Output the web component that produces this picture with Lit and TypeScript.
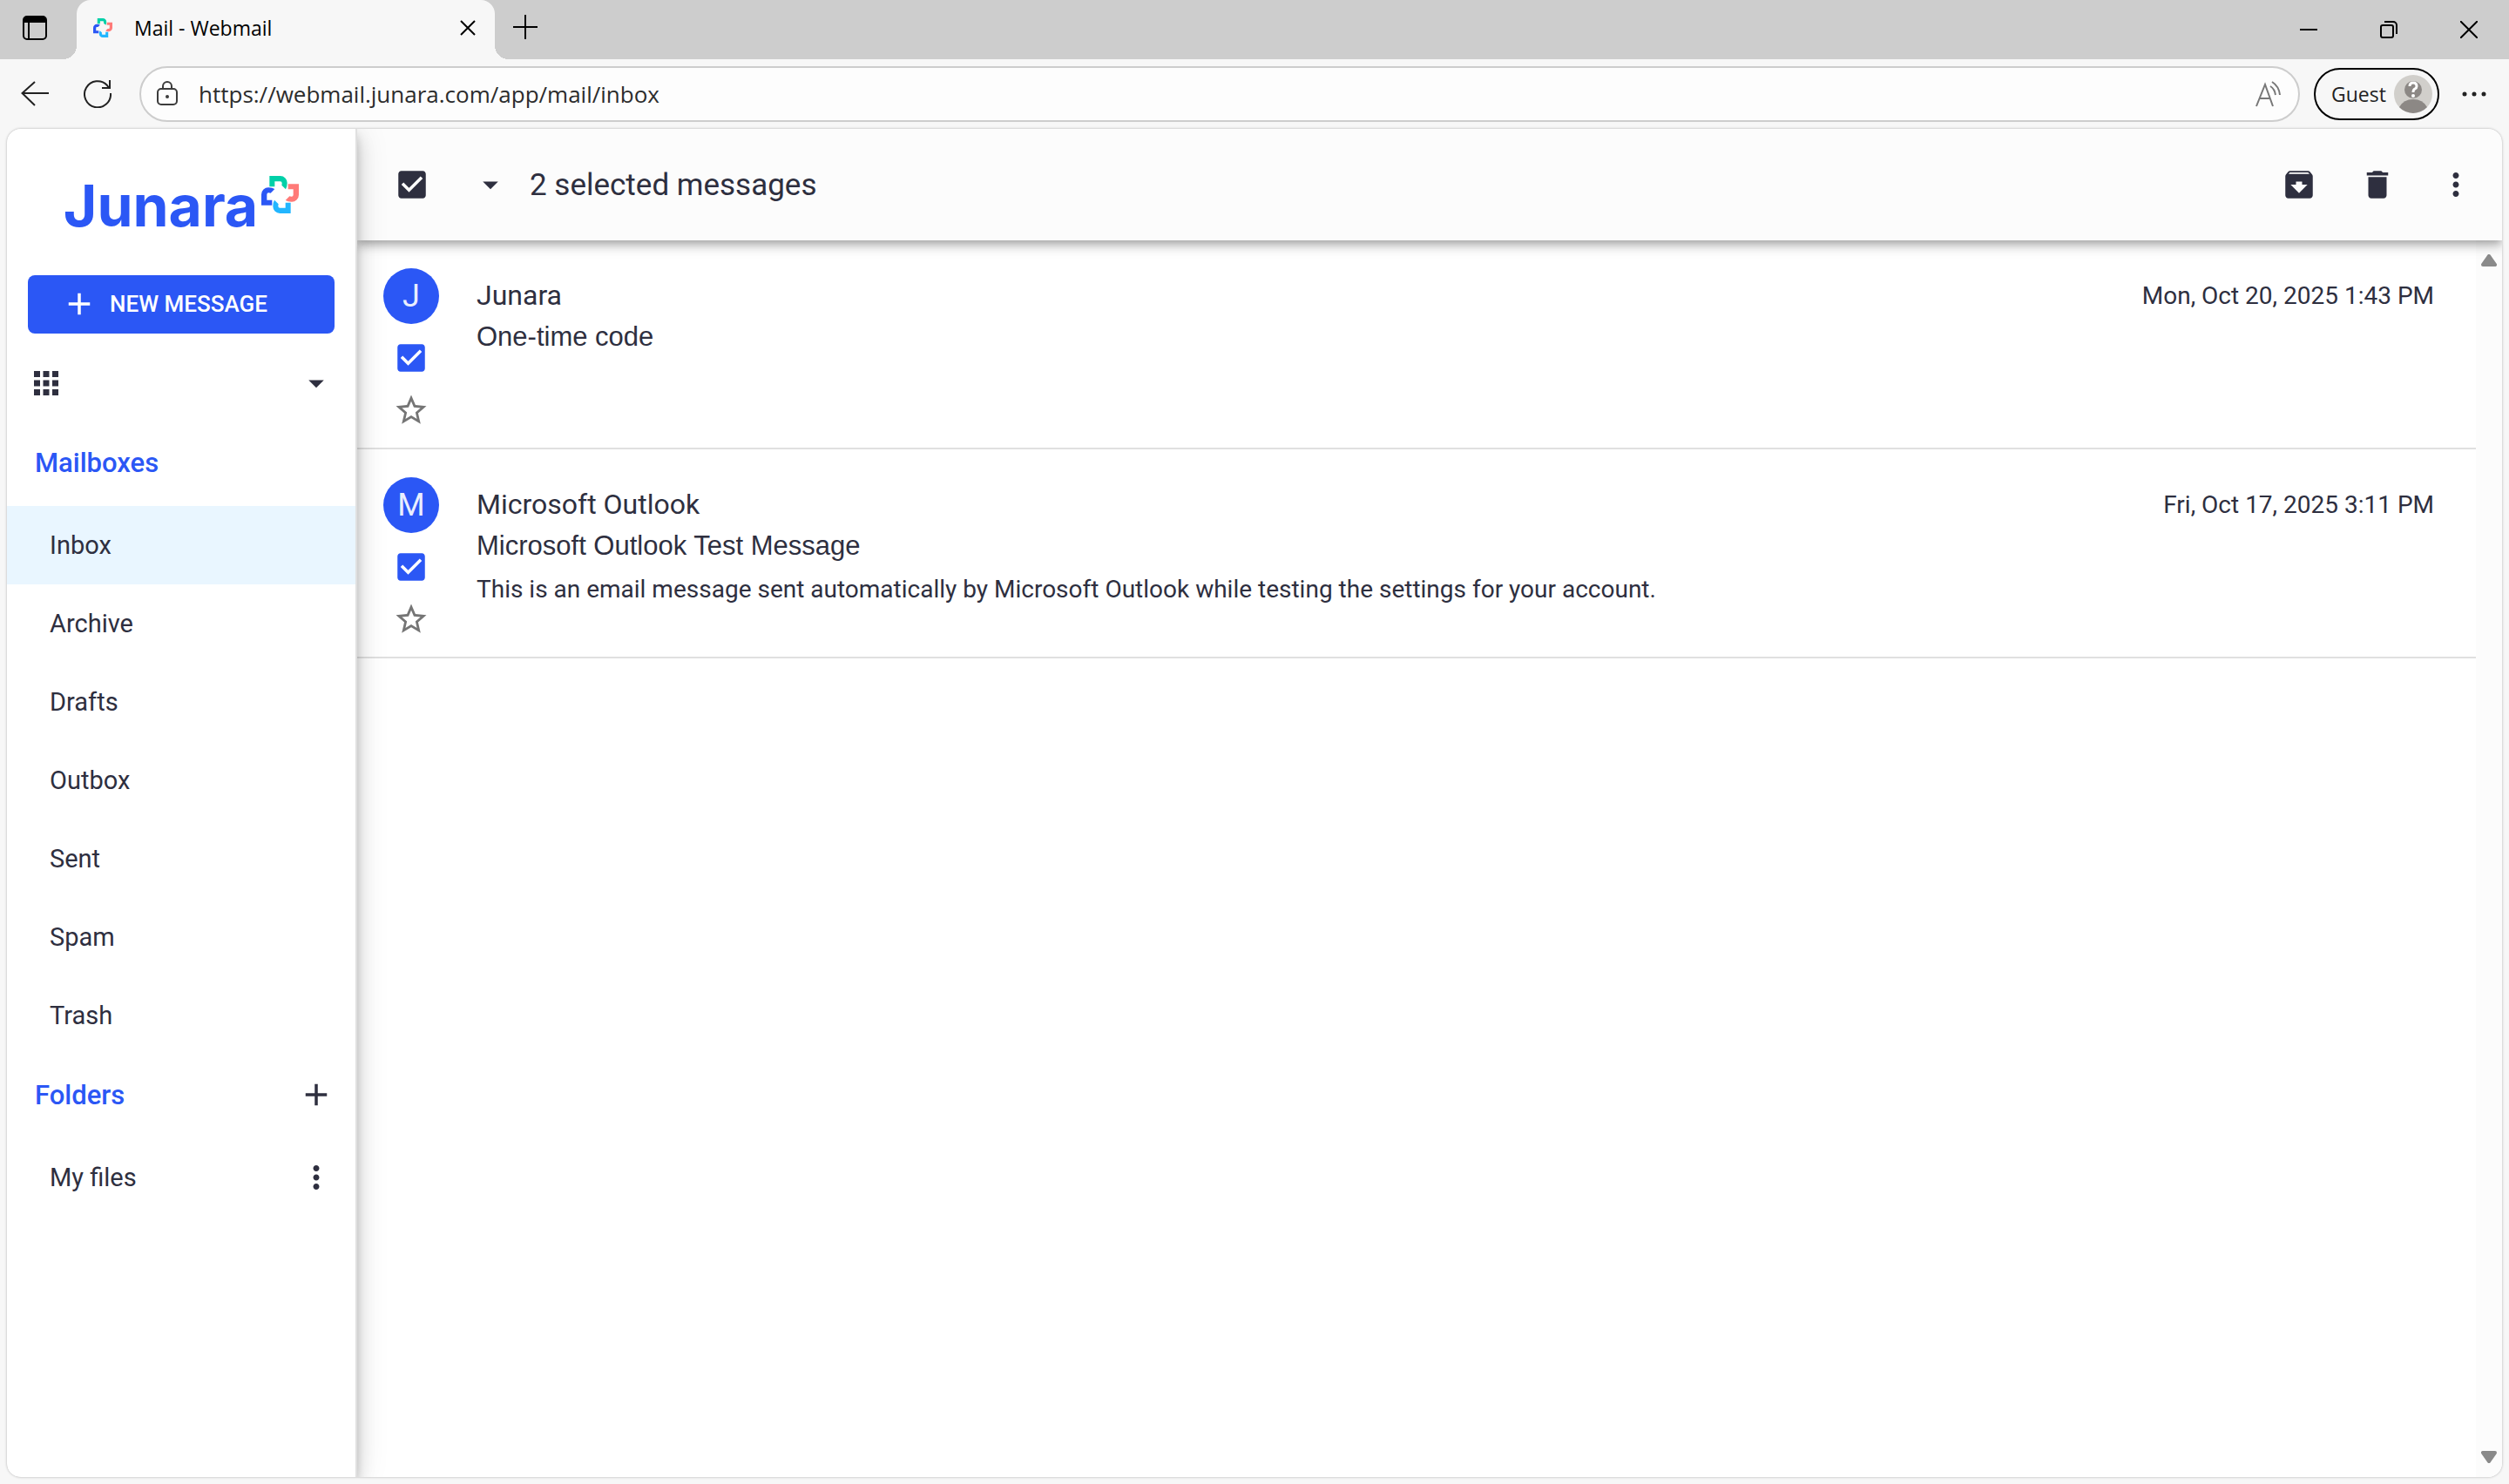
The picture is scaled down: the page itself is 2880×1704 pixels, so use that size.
import { LitElement, html, css, svg, nothing } from "lit";
import { customElement, property, state } from "lit/decorators.js";
import { classMap } from "lit/directives/class-map.js";

interface Message {
  id: number;
  sender: string;
  subject: string;
  preview: string;
  date: string;
  selected: boolean;
}

const ICONS = {
  plus: svg`<path d="M19 13h-6v6h-2v-6H5v-2h6V5h2v6h6v2z"/>`,
  apps: svg`<path d="M4 8h4V4H4v4zm6 12h4v-4h-4v4zm-6 0h4v-4H4v4zm0-6h4v-4H4v4zm6 0h4v-4h-4v4zm6-10v4h4V4h-4zm-6 4h4V4h-4v4zm6 6h4v-4h-4v4zm0 6h4v-4h-4v4z"/>`,
  caret: svg`<path d="M7 10l5 5 5-5z"/>`,
  more: svg`<path d="M12 8c1.1 0 2-.9 2-2s-.9-2-2-2-2 .9-2 2 .9 2 2 2zm0 2c-1.1 0-2 .9-2 2s.9 2 2 2 2-.9 2-2-.9-2-2-2zm0 6c-1.1 0-2 .9-2 2s.9 2 2 2 2-.9 2-2-.9-2-2-2z"/>`,
  checked: svg`<path d="M19 3H5c-1.11 0-2 .9-2 2v14c0 1.1.89 2 2 2h14c1.11 0 2-.9 2-2V5c0-1.1-.89-2-2-2zm-9 14l-5-5 1.41-1.41L10 14.17l7.59-7.59L19 8l-9 9z"/>`,
  unchecked: svg`<path d="M19 5v14H5V5h14m0-2H5c-1.1 0-2 .9-2 2v14c0 1.1.9 2 2 2h14c1.1 0 2-.9 2-2V5c0-1.1-.9-2-2-2z"/>`,
  star: svg`<path d="M22 9.24l-7.19-.62L12 2 9.19 8.63 2 9.24l5.46 4.73L5.82 21 12 17.27 18.18 21l-1.63-7.03L22 9.24zM12 15.4l-3.76 2.27 1-4.28-3.32-2.88 4.38-.38L12 6.1l1.71 4.04 4.38.38-3.32 2.88 1 4.28L12 15.4z"/>`,
  archive: svg`<path d="M20.54 5.23l-1.39-1.68C18.88 3.21 18.47 3 18 3H6c-.47 0-.88.21-1.16.55L3.46 5.23C3.17 5.57 3 6.02 3 6.5V19c0 1.1.9 2 2 2h14c1.1 0 2-.9 2-2V6.5c0-.48-.17-.93-.46-1.27zM12 17.500L6.500 12H10v-2h4v2h3.500L12 17.500zM5.120 5l.810-1h12l.940 1H5.120z"/>`,
  trash: svg`<path d="M6 19c0 1.1.9 2 2 2h8c1.100 0 2-.9 2-2V7H6v12zM19 4h-3.500l-1-1h-5l-1 1H5v2h14V4z"/>`,
};

type IconName = keyof typeof ICONS;

const icon = (name: IconName) =>
  html`<svg class="icon" viewBox="0 0 24 24" aria-hidden="true">${ICONS[name]}</svg>`;

const PETAL = "M28 0H65A24 24 0 0 1 89 25Q89 38 84 46L70 32Q71 30 71 25A6 6 0 0 0 65 19H46V37H28Z";

const brandMark = () => html`
  <svg class="mark" viewBox="0 0 129 129" aria-hidden="true">
    ${["#00d0a8", "#ff7a78", "#22b6ff", "#2b57f5"].map(
      (fill, i) => svg`<path d=${PETAL} fill=${fill} transform="rotate(${i * 90} 64.5 64.5)"/>`
    )}
  </svg>
`;

const sharedStyles = css`
  :host,
  * {
    box-sizing: border-box;
  }
  button {
    display: flex;
    align-items: center;
    justify-content: center;
    padding: 0;
    border: 0;
    background: none;
    color: inherit;
    font: inherit;
    cursor: pointer;
  }
  a {
    color: inherit;
    text-decoration: none;
  }
  svg {
    display: block;
    flex: none;
  }
  .icon {
    width: 42px;
    height: 42px;
    fill: currentColor;
  }
`;

@customElement("browser-chrome")
class BrowserChrome extends LitElement {
  @property() url = "";
  @property() heading = "";

  static styles = [
    sharedStyles,
    css`
      :host {
        display: block;
        font-family: "Open Sans", "Noto Sans", sans-serif;
        color: #000;
      }
      .tabs {
        display: flex;
        height: 68px;
        background: #cdcdcd;
      }
      .workspace {
        width: 88px;
        padding: 0 8px 4px 0;
      }
      .line {
        fill: none;
        stroke: currentColor;
        stroke-width: 2;
      }
      .tab {
        position: relative;
        display: flex;
        align-items: center;
        gap: 25px;
        width: 480px;
        padding: 0 14px 5px 19px;
        border-radius: 16px 16px 0 0;
        background: #f7f7f7;
        font-size: 23px;
      }
      .tab::before,
      .tab::after {
        content: "";
        position: absolute;
        bottom: 0;
        width: 16px;
        height: 16px;
      }
      .tab::before {
        right: 100%;
        background: radial-gradient(circle at 0 0, #cdcdcd 16px, #f7f7f7 16px);
      }
      .tab::after {
        left: 100%;
        background: radial-gradient(circle at 100% 0, #cdcdcd 16px, #f7f7f7 16px);
      }
      .mark {
        width: 22px;
        height: 22px;
      }
      .title {
        flex: 1;
      }
      .close {
        width: 34px;
        height: 34px;
      }
      .new-tab {
        width: 70px;
        padding-bottom: 6px;
      }
      .window {
        display: flex;
        margin-left: auto;
      }
      .window button {
        width: 92px;
      }
      .nav {
        display: flex;
        align-items: center;
        height: 80px;
        padding-left: 4px;
        color: #222;
      }
      .nav-button {
        width: 72px;
        height: 64px;
      }
      .address {
        display: flex;
        flex: 1;
        align-items: center;
        height: 64px;
        margin: 0 16px 0 12px;
        padding: 0 18px;
        border: 2px solid #cdcdcd;
        border-radius: 32px;
        background: #fdfdfd;
      }
      .lock {
        color: #3c3c3c;
      }
      .address input {
        flex: 1;
        min-width: 0;
        margin: 0 24px;
        padding: 0;
        border: 0;
        outline: 0;
        background: none;
        color: #2c2c2c;
        font: inherit;
        font-size: 26px;
      }
      .read {
        color: #777;
      }
      .guest {
        justify-content: space-between;
        width: 144px;
        height: 60px;
        padding: 0 6px 0 18px;
        border: 2px solid #000;
        border-radius: 30px;
        font-size: 23px;
      }
      .menu {
        width: 80px;
        height: 64px;
      }
    `,
  ];

  render() {
    return html`
      <header>
        <div class="tabs">
          <button class="workspace" aria-label="Tab actions">
            <svg width="28" height="28" viewBox="0 0 28 28">
              <rect class="line" x="1" y="1" width="26" height="26" rx="4" />
              <path d="M1 8V5a4 4 0 0 1 4-4h18a4 4 0 0 1 4 4v3z" />
              <path class="line" d="M7 8v19" />
            </svg>
          </button>
          <div class="tab">
            ${brandMark()}
            <span class="title">${this.heading}</span>
            <button class="close" aria-label="Close tab">
              <svg width="18" height="18" viewBox="0 0 18 18"><path class="line" d="M1 1l16 16M17 1L1 17" /></svg>
            </button>
          </div>
          <button class="new-tab" aria-label="New tab">
            <svg width="28" height="28" viewBox="0 0 28 28"><path class="line" d="M14 0v28M0 14h28" /></svg>
          </button>
          <div class="window">
            <button aria-label="Minimize">
              <svg width="20" height="20" viewBox="0 0 20 20"><path class="line" d="M0 10h20" /></svg>
            </button>
            <button aria-label="Restore">
              <svg width="20" height="20" viewBox="0 0 20 20">
                <rect class="line" x="1" y="5" width="14" height="14" rx="2" />
                <path class="line" d="M5 1h10a4 4 0 0 1 4 4v10" />
              </svg>
            </button>
            <button aria-label="Close window">
              <svg width="20" height="20" viewBox="0 0 20 20"><path class="line" d="M0 0l20 20M20 0L0 20" /></svg>
            </button>
          </div>
        </div>
        <div class="nav">
          <button class="nav-button" aria-label="Back">
            <svg width="32" height="30" viewBox="0 0 32 30"><path class="line" d="M32 14H1M16 1L1.500 14 16 28" /></svg>
          </button>
          <button class="nav-button" aria-label="Refresh">
            <svg width="32" height="32" viewBox="0 0 32 32">
              <path class="line" d="M31 15A15 15 0 1 1 27 6l2 3M30 0v9h-9" />
            </svg>
          </button>
          <div class="address">
            <svg class="lock" width="24" height="30" viewBox="0 0 24 30" aria-hidden="true">
              <rect class="line" x="1" y="9" width="22" height="18" rx="4" />
              <path class="line" d="M7 9V6a5 5 0 0 1 10 0v3" />
              <circle cx="12" cy="18" r="2" fill="currentColor" />
            </svg>
            <input type="text" aria-label="Address" .value=${this.url} />
            <button class="read" aria-label="Read aloud">
              <svg width="32" height="32" viewBox="0 0 32 32">
                <path class="line" d="M2 30L12 5l9 25M6 21h12" />
                <path class="line" d="M18 7q5 3 6 10M20 2q8 5 9 15" />
              </svg>
            </button>
          </div>
          <button class="guest" aria-label="Guest profile">
            <span>Guest</span>
            <svg width="44" height="44" viewBox="0 0 44 44">
              <circle cx="22" cy="22" r="22" fill="#d1cfcb" />
              <path d="M6 37q5-9 16-9t16 9a22 22 0 0 1-32 0z" fill="#8c8885" />
              <circle cx="22" cy="17" r="10" fill="#8c8885" />
              <path d="M18 13q0-4 4-4t4 4q0 2-2 3t-2 4" fill="none" stroke="#fff" stroke-width="3" />
              <circle cx="22" cy="24" r="2" fill="#fff" />
            </svg>
          </button>
          <button class="menu" aria-label="Settings and more">
            <svg width="28" height="6" viewBox="0 0 28 6" fill="#222">
              <circle cx="3" cy="3" r="2.500" /><circle cx="14" cy="3" r="2.500" /><circle cx="25" cy="3" r="2.500" />
            </svg>
          </button>
        </div>
      </header>
    `;
  }
}

@customElement("mail-sidebar")
class MailSidebar extends LitElement {
  @state() private current = "Inbox";

  private mailboxes = ["Inbox", "Archive", "Drafts", "Outbox", "Sent", "Spam", "Trash"];

  static styles = [
    sharedStyles,
    css`
      :host {
        display: block;
        position: relative;
        z-index: 2;
        flex: none;
        width: 402px;
        border-right: 2px solid #e0e0e0;
        background: #fff;
        box-shadow: 0 6px 10px -2px rgba(0, 0, 0, 0.2), 0 12px 20px rgba(0, 0, 0, 0.14),
          0 2px 36px rgba(0, 0, 0, 0.12);
      }
      .logo {
        display: flex;
        justify-content: center;
        gap: 4px;
        height: 168px;
        padding-top: 48px;
        color: #2b57f5;
        font: 700 66px/80px Inter, sans-serif;
      }
      .mark {
        width: 43px;
        height: 43px;
        margin-top: 6px;
      }
      .compose {
        justify-content: flex-start;
        gap: 14px;
        width: 352px;
        height: 67px;
        margin: 0 24px;
        padding: 0 0 2px 38px;
        border-radius: 8px;
        background: #2b57f5;
        color: #fff;
        font-size: 26px;
        font-weight: 500;
      }
      .apps {
        justify-content: space-between;
        width: 100%;
        height: 90px;
        margin-top: 12px;
        padding: 0 24px;
      }
      h2 {
        display: flex;
        align-items: center;
        justify-content: space-between;
        height: 96px;
        margin: 0;
        padding: 0 24px 4px 32px;
        color: #2b57f5;
        font-size: 31px;
        font-weight: 500;
      }
      h2 button,
      .folder button {
        color: #2e2f3f;
      }
      ul {
        margin: 0;
        padding: 0;
        list-style: none;
      }
      .folder {
        display: flex;
        align-items: center;
        height: 90px;
        padding-right: 24px;
      }
      .folder a {
        flex: 1;
        padding-left: 49px;
        font-size: 29px;
        line-height: 90px;
      }
      .folder.active {
        background: #e9f6ff;
      }
    `,
  ];

  private renderFolder(name: string, menu = false) {
    return html`
      <li class=${classMap({ folder: true, active: name === this.current })}>
        <a href="#${name}" @click=${() => (this.current = name)}>${name}</a>
        ${menu ? html`<button aria-label="${name} options">${icon("more")}</button>` : nothing}
      </li>
    `;
  }

  render() {
    return html`
      <a class="logo" href="#home"><span>Junara</span>${brandMark()}</a>
      <button class="compose">${icon("plus")}<span>NEW MESSAGE</span></button>
      <button class="apps" aria-label="Applications">${icon("apps")}${icon("caret")}</button>
      <nav>
        <h2>Mailboxes</h2>
        <ul>
          ${this.mailboxes.map((name) => this.renderFolder(name))}
        </ul>
        <h2>Folders<button aria-label="Add folder">${icon("plus")}</button></h2>
        <ul>
          ${this.renderFolder("My files", true)}
        </ul>
      </nav>
    `;
  }
}

@customElement("mail-list")
class MailList extends LitElement {
  @state() private messages: Message[] = [
    {
      id: 1,
      sender: "Junara",
      subject: "One-time code",
      preview: "",
      date: "Mon, Oct 20, 2025 1:43 PM",
      selected: true,
    },
    {
      id: 2,
      sender: "Microsoft Outlook",
      subject: "Microsoft Outlook Test Message",
      preview:
        "This is an email message sent automatically by Microsoft Outlook while testing the settings for your account.",
      date: "Fri, Oct 17, 2025 3:11 PM",
      selected: true,
    },
  ];

  static styles = [
    sharedStyles,
    css`
      :host {
        display: flex;
        flex: 1;
        flex-direction: column;
        min-width: 0;
      }
      .toolbar {
        position: relative;
        z-index: 1;
        display: flex;
        align-items: center;
        height: 128px;
        padding: 0 8px 0 18px;
        background: #fcfcfc;
        box-shadow: 0 4px 8px -2px rgba(0, 0, 0, 0.2), 0 8px 10px rgba(0, 0, 0, 0.14),
          0 2px 20px rgba(0, 0, 0, 0.12);
      }
      .toolbar button,
      .toolbar .check {
        width: 90px;
        height: 90px;
      }
      .count {
        flex: 1;
        font-size: 35px;
      }
      .check {
        display: grid;
        place-items: center;
        cursor: pointer;
      }
      .check > * {
        grid-area: 1 / 1;
      }
      .check input {
        appearance: none;
        width: 32px;
        height: 32px;
        margin: 0;
      }
      .body {
        display: flex;
        flex: 1;
      }
      .messages {
        flex: 1;
        min-width: 0;
        margin: 0;
        padding: 0;
        list-style: none;
      }
      .message {
        display: flex;
        gap: 43px;
        height: 240px;
        padding: 32px 48px 0 30px;
        border-bottom: 2px solid #e0e0e0;
      }
      .rail {
        display: flex;
        flex-direction: column;
        align-items: center;
        gap: 18px;
      }
      .avatar {
        width: 64px;
        height: 64px;
        border-radius: 50%;
        background: #2b57f5;
        color: #e9eefe;
        font-size: 36px;
        line-height: 64px;
        text-align: center;
      }
      .rail .check {
        color: #2b57f5;
      }
      .star {
        color: #757575;
      }
      .text {
        flex: 1;
        min-width: 0;
      }
      .text p {
        margin: 0;
      }
      .sender {
        padding-top: 7px;
        font-size: 32px;
        line-height: 48px;
      }
      .subject {
        font: 31px/48px "Liberation Sans", Arial, sans-serif;
      }
      .preview {
        line-height: 52px;
      }
      time {
        line-height: 64px;
      }
      .scrollbar {
        display: flex;
        flex-direction: column;
        align-items: center;
        justify-content: space-between;
        width: 30px;
        padding: 16px 0;
        background: #fcfcfc;
      }
      .arrow {
        fill: #8a8a8a;
        stroke: #8a8a8a;
        stroke-width: 4;
        stroke-linejoin: round;
      }
    `,
  ];

  private get selectedCount() {
    return this.messages.filter((m) => m.selected).length;
  }

  private toggle(id: number) {
    this.messages = this.messages.map((m) => (m.id === id ? { ...m, selected: !m.selected } : m));
  }

  private toggleAll() {
    const selected = this.selectedCount === 0;
    this.messages = this.messages.map((m) => ({ ...m, selected }));
  }

  private renderCheck(checked: boolean, label: string, onChange: () => void) {
    return html`
      <label class="check">
        <input type="checkbox" aria-label=${label} .checked=${checked} @change=${onChange} />
        ${icon(checked ? "checked" : "unchecked")}
      </label>
    `;
  }

  private renderMessage(m: Message) {
    return html`
      <li class="message">
        <div class="rail">
          <span class="avatar">${m.sender[0]}</span>
          ${this.renderCheck(m.selected, `Select ${m.subject}`, () => this.toggle(m.id))}
          <button class="star" aria-label="Star ${m.subject}">${icon("star")}</button>
        </div>
        <div class="text">
          <p class="sender">${m.sender}</p>
          <p class="subject">${m.subject}</p>
          ${m.preview ? html`<p class="preview">${m.preview}</p>` : nothing}
        </div>
        <time>${m.date}</time>
      </li>
    `;
  }

  render() {
    return html`
      <div class="toolbar">
        ${this.renderCheck(this.selectedCount > 0, "Select all messages", () => this.toggleAll())}
        <button aria-label="Selection options">${icon("caret")}</button>
        <span class="count">${this.selectedCount} selected messages</span>
        <button aria-label="Archive">${icon("archive")}</button>
        <button aria-label="Delete">${icon("trash")}</button>
        <button aria-label="More actions">${icon("more")}</button>
      </div>
      <div class="body">
        <ul class="messages">
          ${this.messages.map((m) => this.renderMessage(m))}
        </ul>
        <div class="scrollbar" aria-hidden="true">
          <svg width="18" height="14" viewBox="0 0 18 14"><path class="arrow" d="M9 2l7 10H2z" /></svg>
          <svg width="18" height="14" viewBox="0 0 18 14"><path class="arrow" d="M2 2h14L9 12z" /></svg>
        </div>
      </div>
    `;
  }
}

@customElement("app-root")
class AppRoot extends LitElement {
  static styles = css`
    :host {
      display: flex;
      flex-direction: column;
      min-height: 100vh;
      background: #f7f7f7;
      color: #2e2f3f;
      font-family: Roboto, sans-serif;
      font-size: 28px;
    }
    .page {
      display: flex;
      flex: 1;
      margin: 0 8px 8px;
      border-radius: 16px;
      background: #fff;
      box-shadow: 0 0 3px rgba(0, 0, 0, 0.3);
      overflow: hidden;
    }
  `;

  render() {
    return html`
      <browser-chrome url="https://webmail.junara.com/app/mail/inbox" heading="Mail - Webmail"></browser-chrome>
      <main class="page">
        <mail-sidebar></mail-sidebar>
        <mail-list></mail-list>
      </main>
    `;
  }
}
